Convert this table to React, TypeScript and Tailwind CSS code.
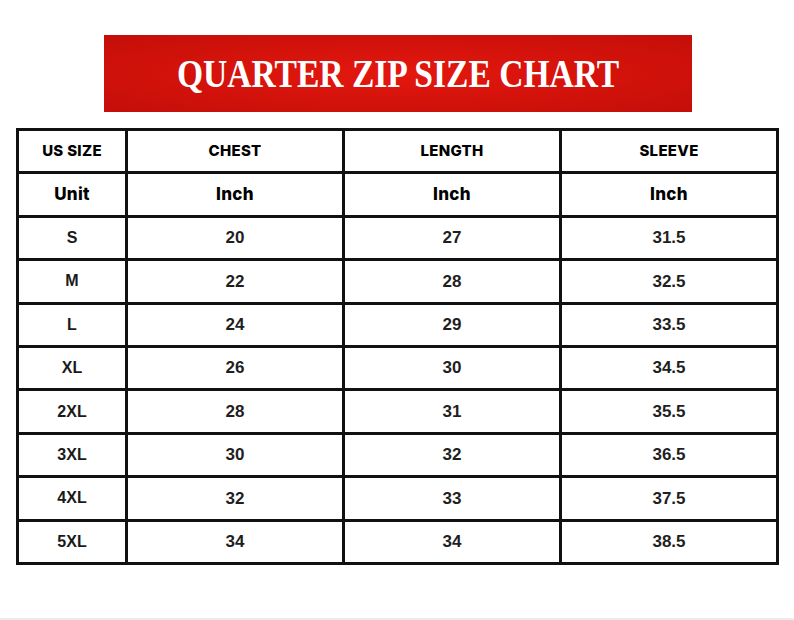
const headers = ['US SIZE', 'CHEST', 'LENGTH', 'SLEEVE']
const units = ['Unit', 'Inch', 'Inch', 'Inch']

const rows = [
  ['S', '20', '27', '31.5'],
  ['M', '22', '28', '32.5'],
  ['L', '24', '29', '33.5'],
  ['XL', '26', '30', '34.5'],
  ['2XL', '28', '31', '35.5'],
  ['3XL', '30', '32', '36.5'],
  ['4XL', '32', '33', '37.5'],
  ['5XL', '34', '34', '38.5'],
]

export default function App() {
  return (
    <div className="w-[794px] h-[620px] bg-white border-b-2 border-[#ececec] pt-[35px] overflow-hidden">
      {/* title banner */}
      <div className="ml-[104px] w-[588px] h-[77px] flex items-center justify-center bg-[radial-gradient(ellipse_at_center,#e4180f_0%,#d2120b_55%,#c40e09_100%)]">
        <span className="inline-block scale-x-[0.86] text-white font-bold text-[39px] leading-none whitespace-nowrap font-['Liberation_Serif',serif]">
          QUARTER ZIP SIZE CHART
        </span>
      </div>

      {/* size table */}
      <div className="ml-[16px] mt-[16px] w-[763px] bg-[#111] p-[3px] grid grid-cols-[106px_214px_214px_214px] grid-rows-[repeat(10,40.4px)] gap-[3px]">
        {headers.map((h) => (
          <div
            key={h}
            className="bg-white flex items-center justify-center text-[15px] font-extrabold tracking-[0.3px] text-black font-['Inter',sans-serif]"
          >
            {h}
          </div>
        ))}
        {units.map((u, i) => (
          <div
            key={'u' + i}
            className="bg-white flex items-center justify-center text-[17px] font-extrabold tracking-[0.3px] text-black font-['Inter',sans-serif]"
          >
            {u}
          </div>
        ))}
        {rows.map((r) =>
          r.map((c, i) => (
            <div
              key={r[0] + i}
              className={
                i === 0
                  ? "bg-white flex items-center justify-center font-bold text-[16px] text-[#1a1a1a] font-['Liberation_Sans',Arial,sans-serif]"
                  : "bg-white flex items-center justify-center font-bold text-[17px] text-[#1f1f1f] font-['Liberation_Sans',Arial,sans-serif]"
              }
            >
              {c}
            </div>
          ))
        )}
      </div>
    </div>
  )
}
